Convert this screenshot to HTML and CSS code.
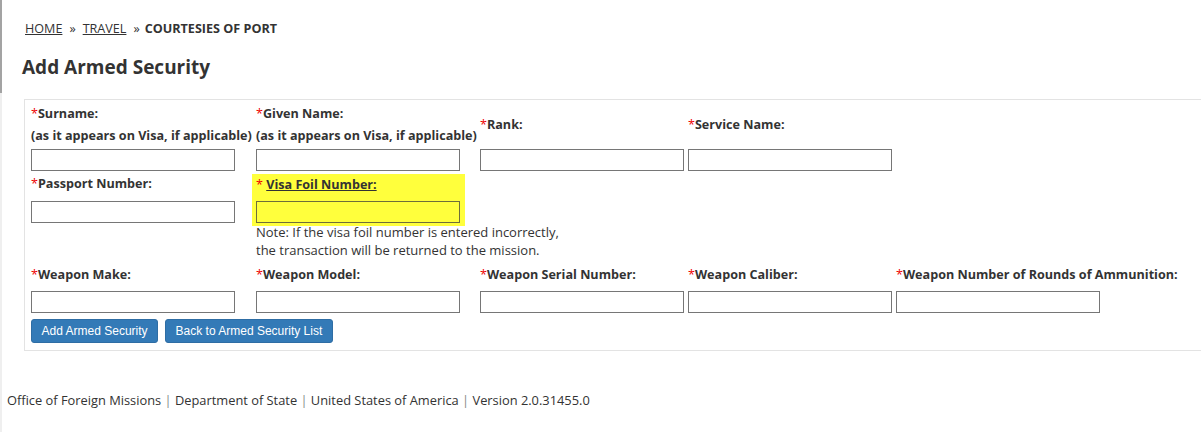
FILE: index.html
```html
<!DOCTYPE html>
<html>
<head>
<meta charset="utf-8">
<title>Add Armed Security</title>
<link rel="stylesheet" href="styles.css">
</head>
<body>
<div class="page">
  <div class="rail"></div>
  <div class="content">
    <nav class="crumbs">
      <a href="#">HOME</a><span class="sep">»</span><a href="#">TRAVEL</a><span class="sep sep-last">»</span><strong>COURTESIES OF PORT</strong>
    </nav>
    <h1 class="title">Add Armed Security</h1>

    <form class="panel">
      <div class="row r1">
        <div class="field">
          <label class="lbl tall"><span><span class="req">*</span>Surname:<br>(as it appears on Visa, if applicable)</span></label>
          <input class="inp" type="text">
        </div>
        <div class="field">
          <label class="lbl tall"><span><span class="req">*</span>Given Name:<br>(as it appears on Visa, if applicable)</span></label>
          <input class="inp" type="text">
        </div>
        <div class="field">
          <label class="lbl tall"><span><span class="req">*</span>Rank:</span></label>
          <input class="inp" type="text">
        </div>
        <div class="field">
          <label class="lbl tall"><span><span class="req">*</span>Service Name:</span></label>
          <input class="inp" type="text">
        </div>
      </div>

      <div class="row r2">
        <div class="field">
          <label class="lbl"><span class="req">*</span>Passport Number:</label>
          <input class="inp" type="text">
        </div>
        <div class="field hl">
          <label class="lbl"><span class="req">*</span> <u>Visa Foil Number:</u></label>
          <input class="inp inp-hl" type="text">
        </div>
        <p class="note">Note: If the visa foil number is entered incorrectly,<br>the transaction will be returned to the mission.</p>
      </div>

      <div class="row r3">
        <div class="field">
          <label class="lbl"><span class="req">*</span>Weapon Make:</label>
          <input class="inp" type="text">
        </div>
        <div class="field">
          <label class="lbl"><span class="req">*</span>Weapon Model:</label>
          <input class="inp" type="text">
        </div>
        <div class="field">
          <label class="lbl"><span class="req">*</span>Weapon Serial Number:</label>
          <input class="inp" type="text">
        </div>
        <div class="field">
          <label class="lbl"><span class="req">*</span>Weapon Caliber:</label>
          <input class="inp" type="text">
        </div>
        <div class="field">
          <label class="lbl nowrap"><span class="req">*</span>Weapon Number of Rounds of Ammunition:</label>
          <input class="inp" type="text">
        </div>
      </div>

      <div class="actions">
        <button type="button" class="btn">Add Armed Security</button>
        <button type="button" class="btn">Back to Armed Security List</button>
      </div>
    </form>

    <footer class="footer">
      Office of Foreign Missions <span class="bar">|</span> Department of State <span class="bar">|</span> United States of America <span class="bar">|</span> Version 2.0.31455.0
    </footer>
  </div>
</div>
</body>
</html>
```

FILE: styles.css
```css
html, body {
  margin: 0;
  padding: 0;
  background: #fff;
}

body {
  font-family: "Open Sans", "Noto Sans", sans-serif;
  font-size: 13px;
  color: #333;
  overflow: hidden;
}

.page {
  display: flex;
  min-height: 432px;
}

.rail {
  flex: none;
  width: 2px;
  background: linear-gradient(#a3a3a3 0, #a3a3a3 93px, #efefef 93px, #efefef 100%);
}

.content {
  flex: 1;
  min-width: 0;
}

/* breadcrumb */
.crumbs {
  padding: 21px 0 0 23px;
  height: 16px;
  line-height: 16px;
  font-size: 12.6px;
  color: #333;
  white-space: nowrap;
}

.crumbs a {
  color: #333;
  text-decoration: underline;
}

.crumbs .sep {
  margin: 0 7px;
}

.crumbs .sep-last {
  margin-right: 5px;
}

.crumbs strong {
  font-weight: 700;
}

.title {
  margin: 18px 0 0 20px;
  height: 24px;
  line-height: 24px;
  font-size: 19px;
  font-weight: 700;
  color: #333;
}

/* form panel */
.panel {
  margin: 20px 0 0 22px;
  border: 1px solid #e3e3e3;
  border-right: none;
  padding: 3px 0 7px 6px;
}

.row {
  display: grid;
  grid-template-columns: 221px 220px 204px 204px 204px;
  column-gap: 4px;
}

.field {
  display: flex;
  flex-direction: column;
  align-items: flex-start;
}

.lbl {
  display: block;
  font-size: 12.6px;
  font-weight: 700;
  line-height: 22px;
  height: 22px;
  white-space: nowrap;
}

.lbl.tall {
  height: 44px;
  display: flex;
  align-items: center;
}

.req {
  color: #e00;
  font-weight: 400;
}

.inp {
  box-sizing: border-box;
  width: 204px;
  height: 22px;
  margin: 0;
  padding: 1px 4px;
  border: 1px solid #767676;
  background: #fff;
  font: inherit;
}

.r1 .inp {
  margin-top: 2px;
}

.r2 {
  margin-top: 2px;
}

.r2 .inp {
  margin-top: 6px;
}

.hl {
  background: #ffff3c;
  width: 213px;
  box-sizing: border-box;
  margin: 1px 0 -3px -4px;
  padding: 0 0 3px 4px;
}

.hl .lbl {
  line-height: 21px;
  height: 21px;
}

.inp-hl {
  background: #ffff3c;
  border-color: #6e6e3a;
}

.note {
  grid-column: 2 / span 3;
  margin: 0;
  line-height: 18px;
  font-size: 13px;
  white-space: nowrap;
}

.r3 {
  margin-top: 5px;
}

.r3 .inp {
  margin-top: 5px;
}

.actions {
  display: flex;
  gap: 7px;
  margin-top: 6px;
}

.btn {
  height: 24px;
  padding: 0 9.5px;
  border: 1px solid #2e6da4;
  border-radius: 3px;
  background: #337ab7;
  color: #fff;
  font-family: "Liberation Sans", Arial, sans-serif;
  font-size: 12px;
  line-height: 22px;
  cursor: pointer;
}

.footer {
  margin: 40px 0 0 5px;
  line-height: 18px;
  font-size: 12.85px;
  color: #333;
  white-space: nowrap;
}

.footer .bar {
  color: #888;
}
```
